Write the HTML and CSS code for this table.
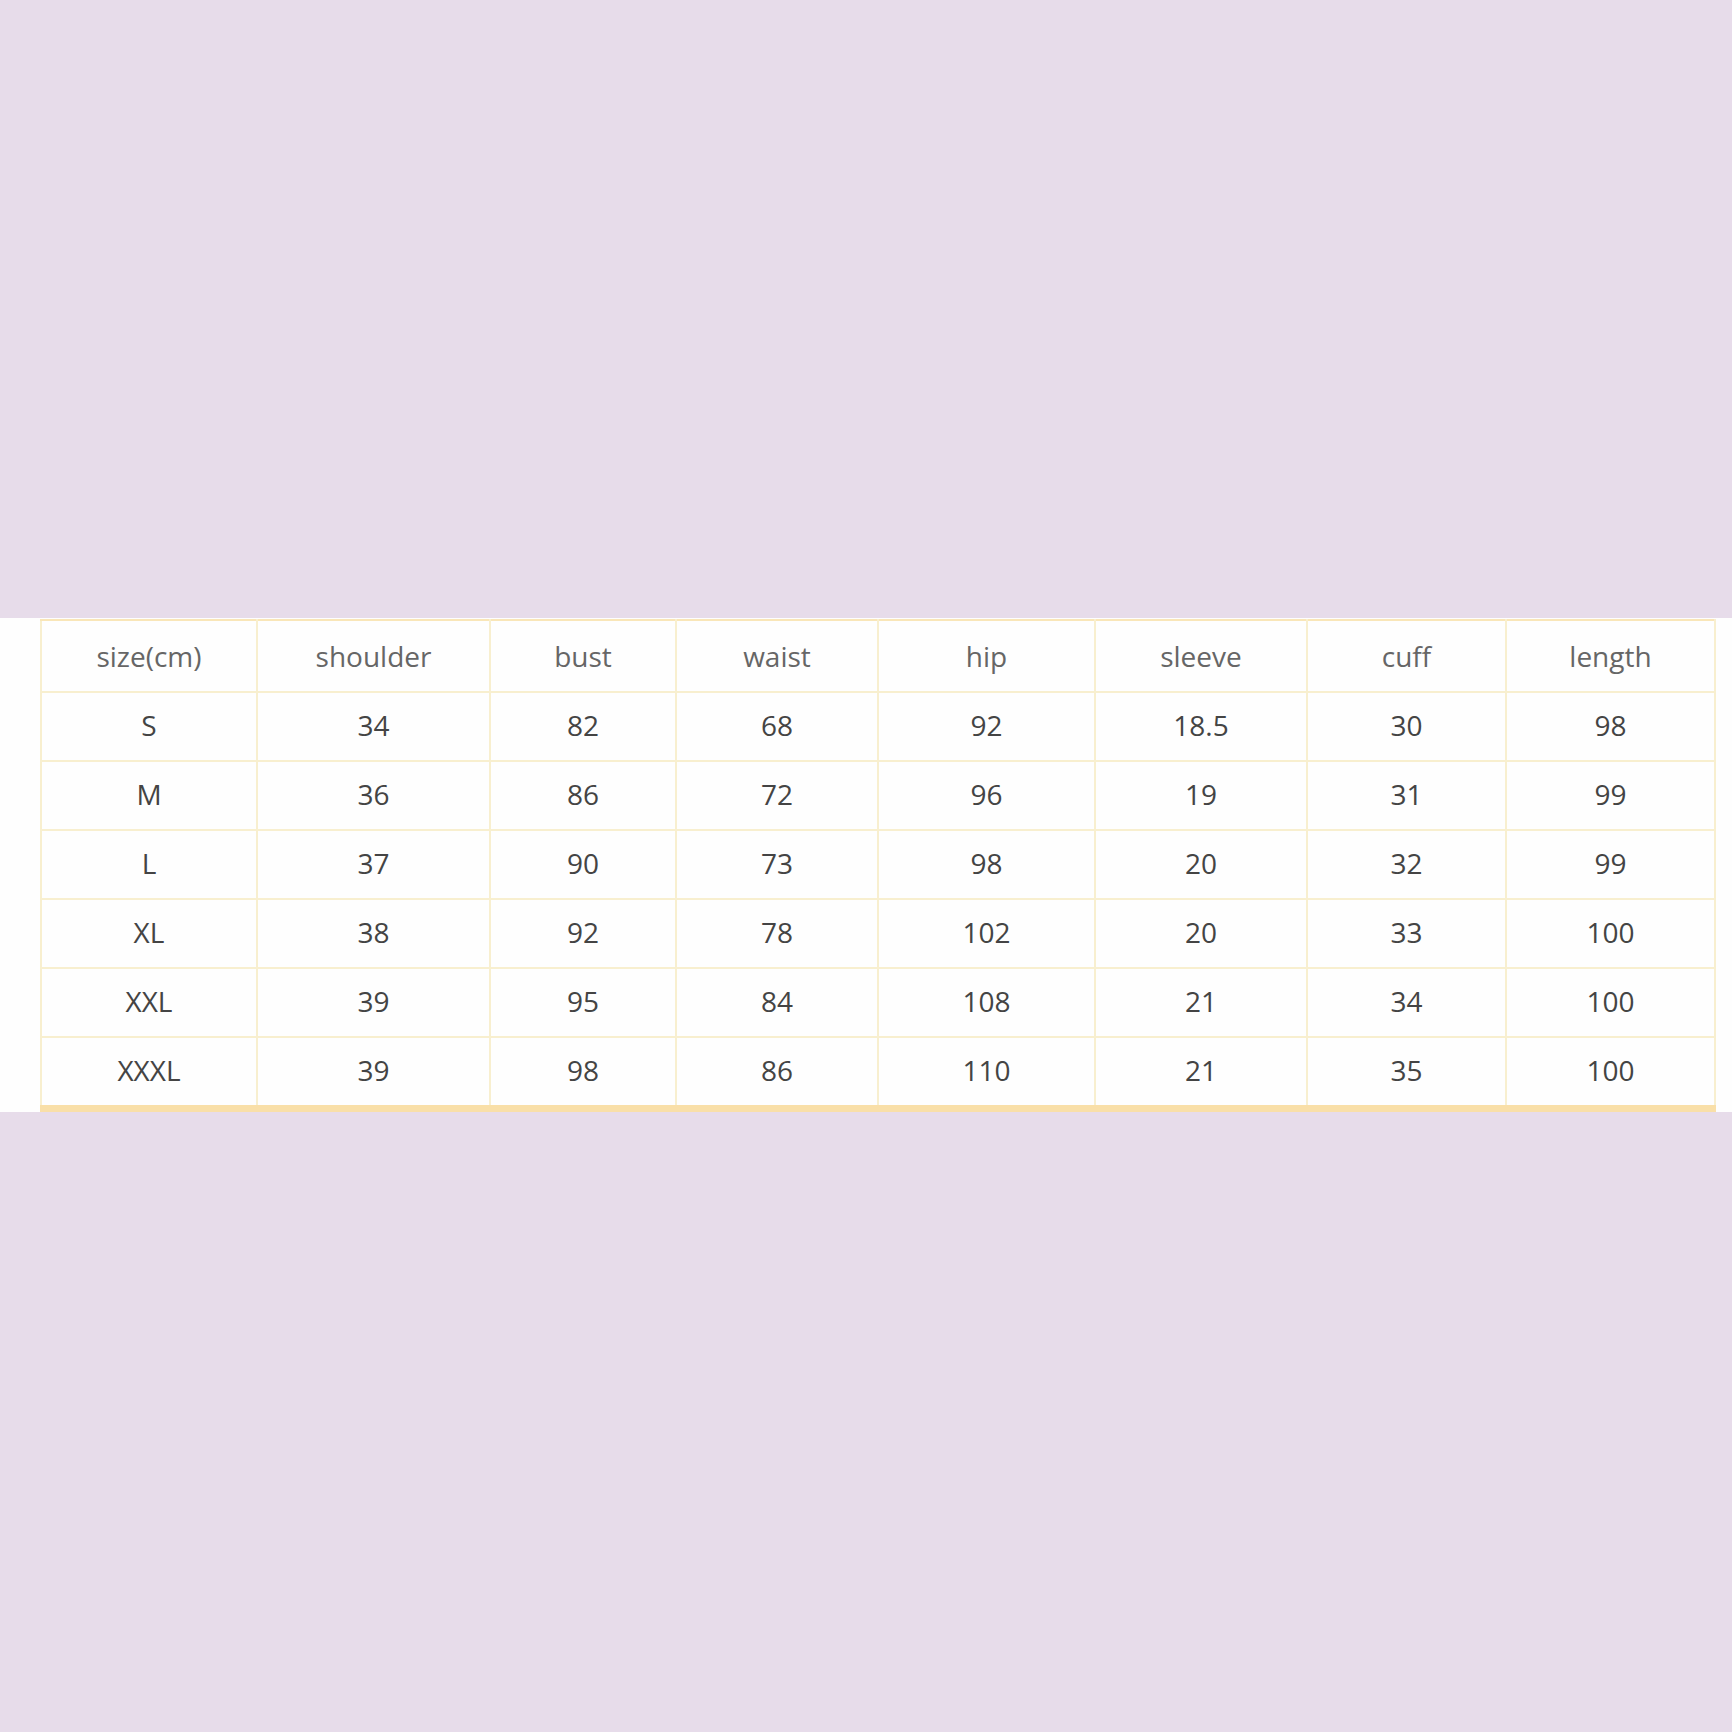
FILE: index.html
```html
<!DOCTYPE html>
<html>
<head>
<meta charset="utf-8">
<link rel="stylesheet" href="styles.css">
</head>
<body>
<div class="page">
  <div class="band">
    <table class="sizes">
      <colgroup>
        <col style="width:216px"><col style="width:233px"><col style="width:186px"><col style="width:202px"><col style="width:217px"><col style="width:212px"><col style="width:199px"><col style="width:209px">
      </colgroup>
      <thead>
        <tr><th>size(cm)</th><th>shoulder</th><th>bust</th><th>waist</th><th>hip</th><th>sleeve</th><th>cuff</th><th>length</th></tr>
      </thead>
      <tbody>
        <tr><td>S</td><td>34</td><td>82</td><td>68</td><td>92</td><td>18.5</td><td>30</td><td>98</td></tr>
        <tr><td>M</td><td>36</td><td>86</td><td>72</td><td>96</td><td>19</td><td>31</td><td>99</td></tr>
        <tr><td>L</td><td>37</td><td>90</td><td>73</td><td>98</td><td>20</td><td>32</td><td>99</td></tr>
        <tr><td>XL</td><td>38</td><td>92</td><td>78</td><td>102</td><td>20</td><td>33</td><td>100</td></tr>
        <tr><td>XXL</td><td>39</td><td>95</td><td>84</td><td>108</td><td>21</td><td>34</td><td>100</td></tr>
        <tr><td>XXXL</td><td>39</td><td>98</td><td>86</td><td>110</td><td>21</td><td>35</td><td>100</td></tr>
      </tbody>
    </table>
  </div>
</div>
</body>
</html>
```
FILE: styles.css
```css
html, body {
  margin: 0;
  padding: 0;
  background: #e7dcea;
}
.page {
  width: 1732px;
  height: 1732px;
  display: flex;
  flex-direction: column;
  padding-top: 618px;
  box-sizing: border-box;
}
.band {
  background: #fefefe;
  padding: 1px 18px 0 40px;
}
.sizes {
  border-collapse: collapse;
  table-layout: fixed;
  width: 1674px;
  font-family: "Open Sans", "Noto Sans", sans-serif;
  font-size: 28px;
  color: #444;
}
.sizes th, .sizes td {
  border: 2px solid #f8efcf;
  text-align: center;
  padding: 0;
  font-weight: normal;
}
.sizes th {
  height: 70px;
  color: #666;
  border-top-color: #f9e6b8;
}
.sizes td {
  height: 64px;
  padding-bottom: 3px;
}
.sizes tbody tr:last-child td {
  border-bottom: 7px solid #f9dfa8;
}
```
